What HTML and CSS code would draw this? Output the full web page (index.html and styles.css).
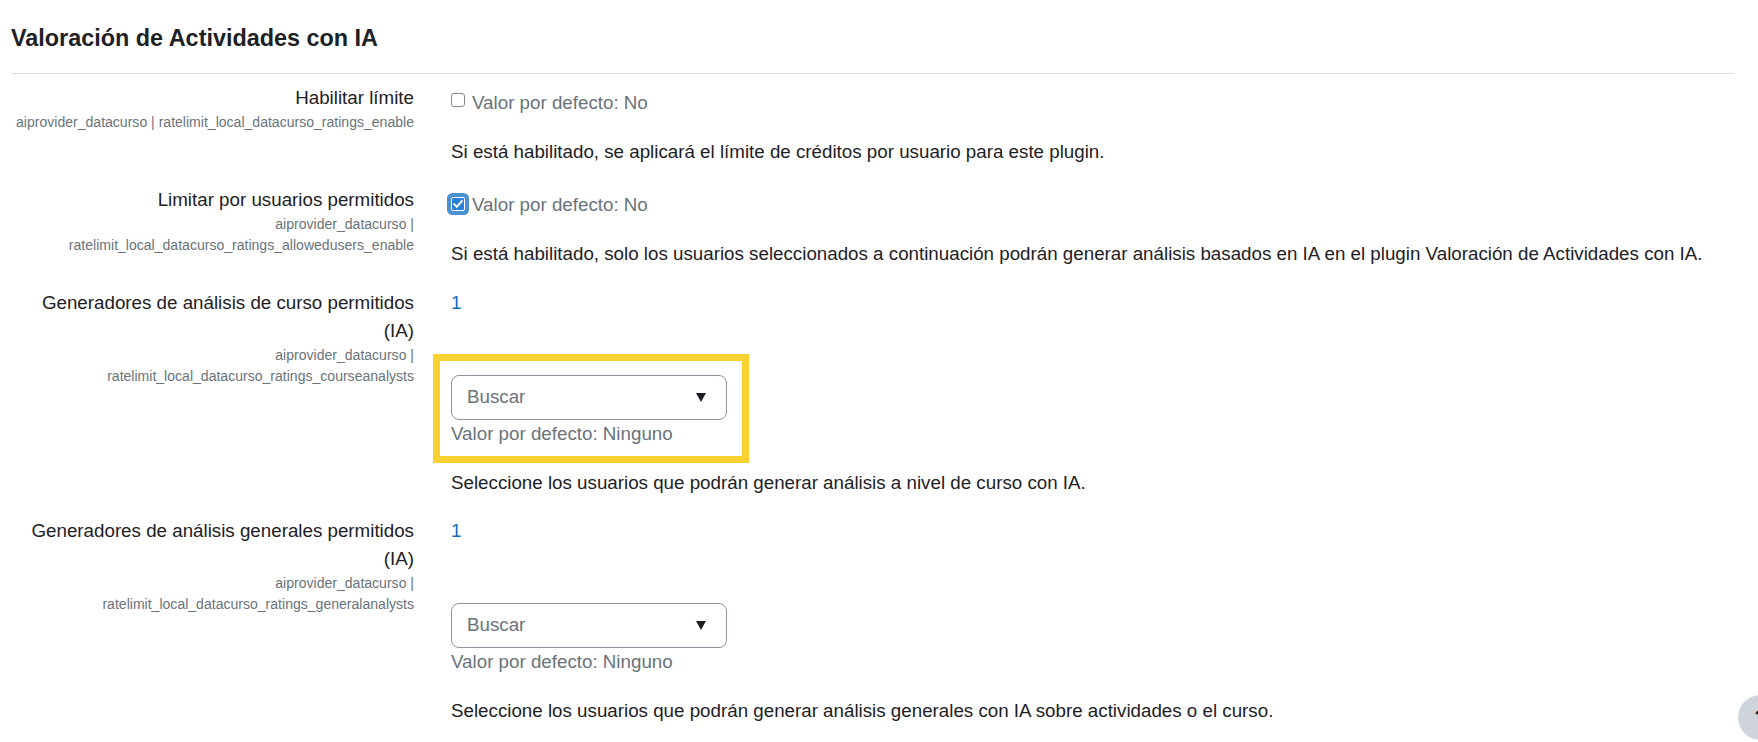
FILE: index.html
```html
<!DOCTYPE html>
<html lang="es">
<head>
<meta charset="utf-8">
<title>Valoración de Actividades con IA</title>
<link rel="stylesheet" href="styles.css">
</head>
<body>
<div class="page">
  <h2 class="section-title">Valoración de Actividades con IA</h2>
  <hr class="divider">
  <div class="settings">
    <div class="setting">
      <div class="setting-label">
        <div class="title">Habilitar límite</div>
        <div class="shortname">aiprovider_datacurso | ratelimit_local_datacurso_ratings_enable</div>
      </div>
      <div class="setting-body">
        <div class="check-line"><span class="cb"></span><span class="default">Valor por defecto: No</span></div>
        <div class="desc">Si está habilitado, se aplicará el límite de créditos por usuario para este plugin.</div>
      </div>
    </div>

    <div class="setting">
      <div class="setting-label">
        <div class="title">Limitar por usuarios permitidos</div>
        <div class="shortname">aiprovider_datacurso | ratelimit_local_datacurso_ratings_allowedusers_enable</div>
      </div>
      <div class="setting-body">
        <div class="check-line"><span class="cb cb-checked"><svg viewBox="0 0 12 12" width="12" height="12"><path d="M2.2 6.3 L4.8 8.8 L9.8 3.2" fill="none" stroke="#fff" stroke-width="1.9" stroke-linecap="square"/></svg></span><span class="default">Valor por defecto: No</span></div>
        <div class="desc">Si está habilitado, solo los usuarios seleccionados a continuación podrán generar análisis basados en IA en el plugin Valoración de Actividades con IA.</div>
      </div>
    </div>

    <div class="setting">
      <div class="setting-label">
        <div class="title">Generadores de análisis de curso permitidos (IA)</div>
        <div class="shortname">aiprovider_datacurso | ratelimit_local_datacurso_ratings_courseanalysts</div>
      </div>
      <div class="setting-body">
        <div class="selection"><a class="sel-link" href="#">1</a></div>
        <div class="autocomplete">
          <div class="highlight"></div>
          <div class="search-box"><span class="placeholder">Buscar</span><svg class="arrow" viewBox="0 0 10 9" width="10" height="9"><polygon points="0,0 10,0 5,9" fill="#1d2125"/></svg></div>
          <div class="default">Valor por defecto: Ninguno</div>
        </div>
        <div class="desc">Seleccione los usuarios que podrán generar análisis a nivel de curso con IA.</div>
      </div>
    </div>

    <div class="setting">
      <div class="setting-label">
        <div class="title">Generadores de análisis generales permitidos (IA)</div>
        <div class="shortname">aiprovider_datacurso | ratelimit_local_datacurso_ratings_generalanalysts</div>
      </div>
      <div class="setting-body">
        <div class="selection"><a class="sel-link" href="#">1</a></div>
        <div class="autocomplete">
          <div class="search-box"><span class="placeholder">Buscar</span><svg class="arrow" viewBox="0 0 10 9" width="10" height="9"><polygon points="0,0 10,0 5,9" fill="#1d2125"/></svg></div>
          <div class="default">Valor por defecto: Ninguno</div>
        </div>
        <div class="desc">Seleccione los usuarios que podrán generar análisis generales con IA sobre actividades o el curso.</div>
      </div>
    </div>
  </div>
</div>
<div class="help-btn"><span class="help-glyph">?</span></div>
</body>
</html>
```
FILE: styles.css
```css
html, body {
  margin: 0;
  padding: 0;
  overflow: hidden;
  background: #ffffff;
}
body {
  font-family: "Liberation Sans", Arial, sans-serif;
  font-size: 18.75px;
  line-height: 28.125px;
  color: #1d2125;
}
.page {
  padding: 0 24px 0 11px;
}
.section-title {
  margin: 24px 0 0;
  font-size: 23.4px;
  line-height: 28px;
  font-weight: bold;
}
.divider {
  border: 0;
  border-top: 1px solid #dee2e6;
  margin: 21px 0 0;
  height: 0;
}
.settings {
  display: flex;
  flex-direction: column;
  gap: 20px;
  padding-top: 10px;
}
.setting {
  display: grid;
  grid-template-columns: 403px 1fr;
  column-gap: 37px;
}
.setting-label {
  text-align: right;
}
.shortname {
  font-size: 14.0625px;
  line-height: 21.1px;
  color: #6a737b;
}
.check-line {
  display: flex;
  align-items: flex-start;
  padding-top: 5px;
}
.cb {
  box-sizing: border-box;
  width: 14px;
  height: 14px;
  margin-top: 4px;
  margin-right: 7px;
  border: 1px solid #858585;
  border-radius: 3px;
  background: #fff;
  flex: none;
  display: flex;
  align-items: center;
  justify-content: center;
}
.cb-checked {
  margin-top: 6px;
  background: #2a7fd6;
  border: 1px solid #ffffff;
  border-radius: 2px;
  box-shadow: 0 0 0 4px #4b91cf;
}
.default {
  color: #6a737b;
}
.desc {
  margin-top: 21px;
}
.sel-link {
  color: #0f6cbf;
  text-decoration: none;
}
.autocomplete {
  position: relative;
  margin-top: 58px;
  width: 276px;
}
.highlight {
  position: absolute;
  left: -18px;
  top: -21px;
  width: 316px;
  height: 109px;
  box-sizing: border-box;
  border: 7px solid #f7d12f;
}
.search-box {
  box-sizing: border-box;
  height: 45px;
  border: 1px solid #8f959e;
  border-radius: 8px;
  background: #fff;
  display: flex;
  align-items: center;
  justify-content: space-between;
  padding: 0 20px 0 15px;
}
.placeholder {
  color: #6a737b;
}
.arrow {
  display: block;
}
.help-btn {
  position: fixed;
  right: -25px;
  bottom: 2px;
  width: 45px;
  height: 45px;
  border-radius: 50%;
  background: #ced4da;
  display: flex;
  align-items: center;
  justify-content: center;
}
.help-glyph {
  font-weight: bold;
  font-size: 20px;
  color: #1d2125;
}
```
